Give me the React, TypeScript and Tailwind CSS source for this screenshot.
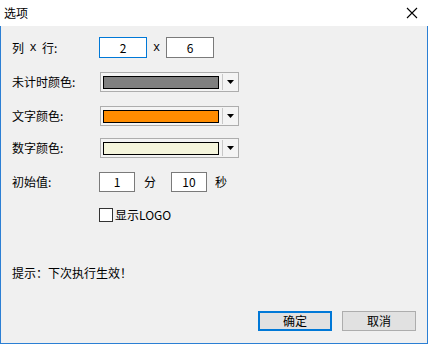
import React from "react";

const font = { fontFamily: '"Noto Sans CJK SC", "Liberation Sans", sans-serif' };
const mono = { fontFamily: '"Liberation Mono", "DejaVu Sans Mono", monospace' };

function Combo({ color }: { color: string }) {
  return (
    <div className="ml-[1px] flex h-[20px] w-[139px] items-center border border-[#adadad] bg-[#f4f4f4] pl-[2px]">
      <div className="h-[13px] w-[116px] border border-black" style={{ backgroundColor: color }} />
      <div className="ml-[3px] h-[16px] w-px bg-[#c8c8c8]" />
      <div className="flex flex-1 items-center justify-center">
        <svg width="8" height="5" viewBox="0 0 8 5">
          <path d="M0 0H7L3.5 4Z" fill="#000" />
        </svg>
      </div>
    </div>
  );
}

function Label({ children }: { children: React.ReactNode }) {
  return <div className="flex w-[87px] shrink-0 items-center text-[12px] leading-none text-black">{children}</div>;
}

export default function App() {
  return (
    <div className="flex h-[344px] w-[428px] flex-col bg-white" style={font}>
      <div className="flex h-[26px] shrink-0 items-center justify-between bg-white pl-[4px] pr-[10px]">
        <span className="text-[12px] text-black">选项</span>
        <svg width="12" height="12" viewBox="0 0 12 12">
          <path d="M1 1L11 11M11 1L1 11" stroke="#000" strokeWidth="1.1" />
        </svg>
      </div>
      <div className="flex flex-1 flex-col border-x border-b border-[#2b7fd4] bg-[#f0f0f0] pl-[11px] pr-[10px]">
        <div className="mt-[11px] flex h-[21px] items-center">
          <Label>
            <span>列</span>
            <span className="w-[18px] text-center" style={mono}>x</span>
            <span>行:</span>
          </Label>
          <div className="flex h-[21px] w-[48px] items-center justify-center border border-[#0078d7] bg-white text-[12px]">2</div>
          <div className="w-[19px] text-center text-[12px]" style={mono}>x</div>
          <div className="flex h-[21px] w-[48px] items-center justify-center border border-[#7a7a7a] bg-white text-[12px]">6</div>
        </div>
        <div className="mt-[14px] flex items-center">
          <Label>未计时颜色:</Label>
          <Combo color="#808080" />
        </div>
        <div className="mt-[14px] flex items-center">
          <Label>文字颜色:</Label>
          <Combo color="#ff8c00" />
        </div>
        <div className="mt-[12px] flex items-center">
          <Label>数字颜色:</Label>
          <Combo color="#f5f5dc" />
        </div>
        <div className="mt-[14px] flex h-[20px] items-center">
          <Label>初始值:</Label>
          <div className="flex h-[20px] w-[36px] items-center justify-center border border-[#7a7a7a] bg-white text-[12px]">1</div>
          <div className="w-[36px] pl-[9px] text-[12px]">分</div>
          <div className="flex h-[20px] w-[36px] items-center justify-center border border-[#7a7a7a] bg-white text-[12px]">10</div>
          <div className="pl-[8px] text-[12px]">秒</div>
        </div>
        <div className="mt-[16px] flex items-center pl-[87px]">
          <div className="h-[14px] w-[14px] border border-[#333] bg-white" />
          <span className="ml-[2px] text-[12px] leading-none">显示LOGO</span>
        </div>
        <div className="mt-[45px] text-[12px] leading-none">提示：下次执行生效！</div>
        <div className="mt-[32px] flex justify-end gap-[10px] pr-[1px]">
          <div className="flex h-[20px] w-[74px] items-center justify-center border-2 border-[#0078d7] bg-[#e1e1e1] text-[12px]">确定</div>
          <div className="flex h-[20px] w-[74px] items-center justify-center border border-[#adadad] bg-[#e1e1e1] text-[12px]">取消</div>
        </div>
      </div>
    </div>
  );
}
